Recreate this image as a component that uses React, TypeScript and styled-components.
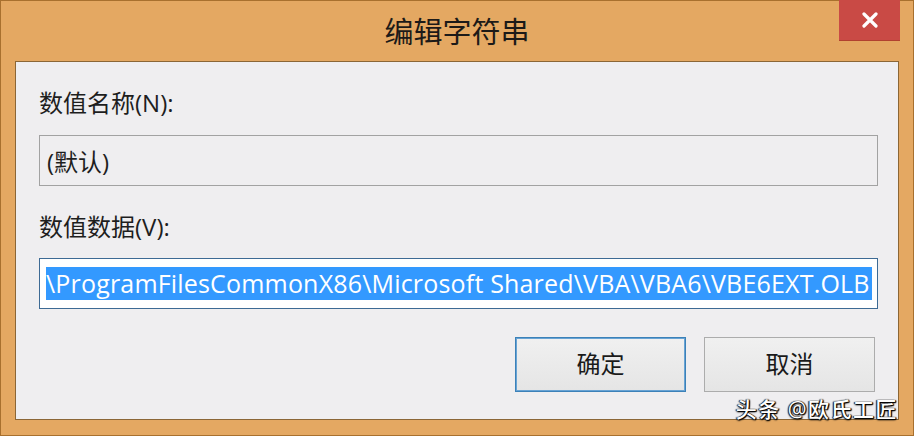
import * as React from 'react';
import styled, { createGlobalStyle } from 'styled-components';

const Global = createGlobalStyle`
	html, body {
		margin: 0;
		padding: 0;
		width: 914px;
		height: 436px;
		overflow: hidden;
	}
	body {
		font-family: "Open Sans", "Noto Sans CJK SC", sans-serif;
	}
`;

const CJK = `"Open Sans", "Noto Sans CJK SC", sans-serif`;

export default function App() {
	return (
		<>
			<Global />
			<Window>
				<TitleBar>
					<span />
					<Title>编辑字符串</Title>
					<CloseButton aria-label="关闭">
						<svg width="16" height="16" viewBox="0 0 16 16">
							<path d="M2 2 L14 14 M14 2 L2 14" stroke="#fff" strokeWidth="3.2" strokeLinecap="round" />
						</svg>
					</CloseButton>
				</TitleBar>
				<Client>
					<Label>数值名称(N):</Label>
					<Field readOnly>
						<FieldText>(默认)</FieldText>
					</Field>
					<Label second>数值数据(V):</Label>
					<Field focused>
						<Selection>\ProgramFilesCommonX86\Microsoft Shared\VBA\VBA6\VBE6EXT.OLB</Selection>
					</Field>
					<Buttons>
						<Button primary>确定</Button>
						<Button>取消</Button>
					</Buttons>
					<Watermark>头条 @欧氏工匠</Watermark>
				</Client>
			</Window>
		</>
	);
}

const Window = styled.div`
	box-sizing: border-box;
	width: 914px;
	height: 436px;
	background: #e4a862;
	border: 1px solid #a8702e;
	display: flex;
	flex-direction: column;
`;

const TitleBar = styled.div`
	height: 60px;
	display: grid;
	grid-template-columns: 1fr auto 1fr;
	align-items: start;
	padding: 0 13px;
`;

const Title = styled.h1`
	margin: 15px 0 0;
	font-family: ${CJK};
	font-weight: 400;
	font-size: 29px;
	line-height: 32px;
	color: #1c1a18;
`;

const CloseButton = styled.button`
	justify-self: end;
	width: 61px;
	height: 41px;
	margin-top: -1px;
	border: none;
	border-bottom: 1px solid #b1412f;
	background: #c94a45;
	display: flex;
	align-items: center;
	justify-content: center;
	padding: 0;
`;

const Client = styled.div`
	position: relative;
	box-sizing: border-box;
	margin: 0 14px 15px 14px;
	flex: 1;
	background: #efeef0;
	border: 1px solid #8b6636;
	padding: 26px 20px 0 23px;
	display: flex;
	flex-direction: column;
`;

const Label = styled.div<{ second?: boolean }>`
	font-family: ${CJK};
	font-size: 24px;
	line-height: 30px;
	color: #1e1e1e;
	margin-top: ${({ second }) => (second ? '26px' : '0')};
`;

const Field = styled.div<{ focused?: boolean; readOnly?: boolean }>`
	box-sizing: border-box;
	height: 51px;
	margin-top: ${({ focused }) => (focused ? '16px' : '17px')};
	border: 1px solid ${({ focused }) => (focused ? '#3d6a94' : '#a2a2a2')};
	background: ${({ focused }) => (focused ? '#ffffff' : '#efeef0')};
	display: flex;
	align-items: center;
	padding: 0 6px;
	overflow: hidden;
	white-space: nowrap;
`;

const FieldText = styled.span`
	font-family: ${CJK};
	font-size: 24px;
	color: #1e1e1e;
	padding-left: 1px;
`;

const Selection = styled.span`
	background: #3399ff;
	color: #ffffff;
	font-family: "Open Sans", sans-serif;
	font-size: 25px;
	line-height: 33px;
	height: 33px;
	letter-spacing: 0.18px;
	padding-right: 2px;
`;

const Buttons = styled.div`
	display: flex;
	justify-content: flex-end;
	gap: 18px;
	margin-top: 28px;
	padding-right: 3px;
`;

const Button = styled.button<{ primary?: boolean }>`
	box-sizing: border-box;
	width: 171px;
	height: 55px;
	border: 1px solid ${({ primary }) => (primary ? '#3c81b8' : '#acacac')};
	box-shadow: ${({ primary }) => (primary ? 'inset 0 0 0 1px #68a3d4' : 'none')};
	background: linear-gradient(#f0f0f0, #e5e5e5);
	font-family: ${CJK};
	font-size: 24px;
	color: #1a1a1a;
	padding: 0 0 4px;
`;

const Watermark = styled.div`
	position: absolute;
	right: 0;
	bottom: -3px;
	font-family: ${CJK};
	font-size: 21px;
	font-weight: 500;
	line-height: 26px;
	color: #ffffff;
	letter-spacing: 1.5px;
	text-shadow: 1px 1px 1px #000, -1px 0 1px #111, 0 1px 2px #000, 1px 0 1px #222;
`;
